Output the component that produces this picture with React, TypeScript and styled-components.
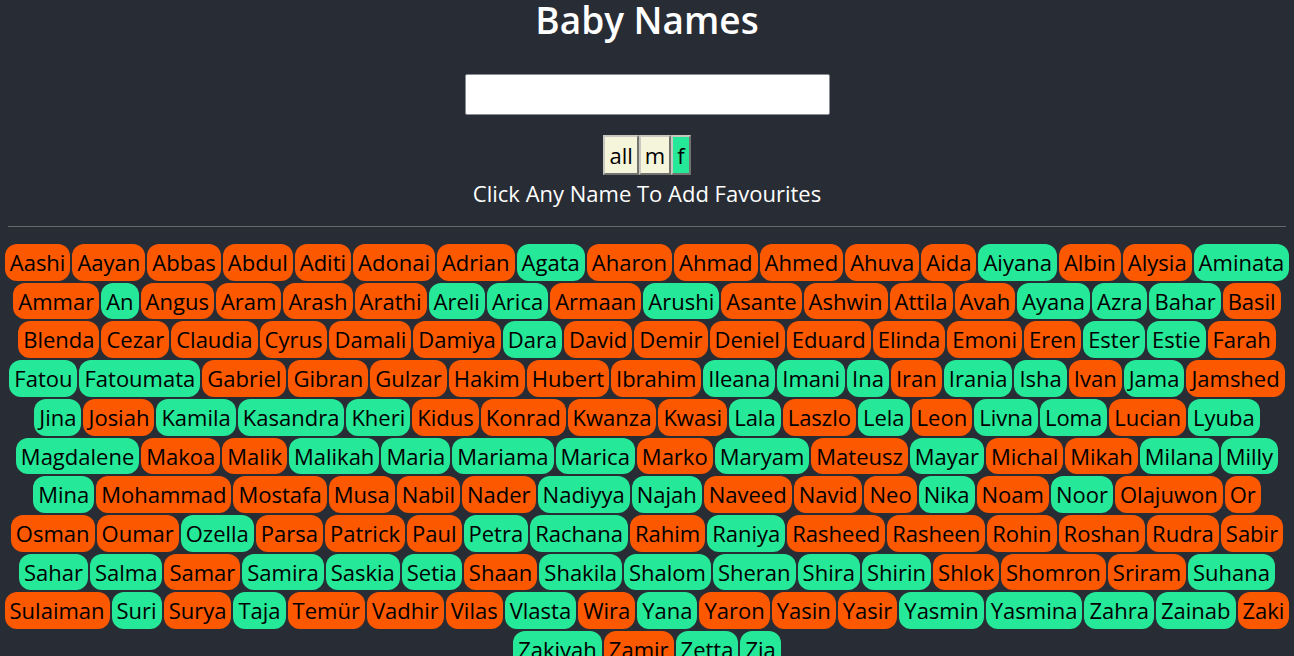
import React, { useState } from "react";
import styled, { createGlobalStyle } from "styled-components";

const GlobalStyle = createGlobalStyle`
  html, body {
    margin: 0;
    padding: 0;
    background: #282c34;
  }
  body {
    font-family: "Open Sans", "Liberation Sans", sans-serif;
  }
`;

type Sex = "m" | "f";
type Name = { name: string; sex: Sex };

const raw: string =
  "Aashi:m Aayan:m Abbas:m Abdul:m Aditi:m Adonai:m Adrian:m Agata:f Aharon:m Ahmad:m Ahmed:m Ahuva:m Aida:m Aiyana:f Albin:m Alysia:m Aminata:f " +
  "Ammar:m An:f Angus:m Aram:m Arash:m Arathi:m Areli:f Arica:f Armaan:m Arushi:f Asante:m Ashwin:m Attila:m Avah:m Ayana:f Azra:f Bahar:f Basil:m " +
  "Blenda:m Cezar:m Claudia:m Cyrus:m Damali:m Damiya:m Dara:f David:m Demir:m Deniel:m Eduard:m Elinda:m Emoni:m Eren:m Ester:f Estie:f Farah:m " +
  "Fatou:f Fatoumata:f Gabriel:m Gibran:m Gulzar:m Hakim:m Hubert:m Ibrahim:m Ileana:f Imani:f Ina:f Iran:m Irania:f Isha:f Ivan:m Jama:f Jamshed:m " +
  "Jina:f Josiah:m Kamila:f Kasandra:f Kheri:f Kidus:m Konrad:m Kwanza:m Kwasi:m Lala:f Laszlo:m Lela:f Leon:m Livna:f Loma:f Lucian:m Lyuba:f " +
  "Magdalene:f Makoa:m Malik:m Malikah:f Maria:f Mariama:f Marica:f Marko:m Maryam:f Mateusz:m Mayar:f Michal:m Mikah:m Milana:f Milly:f " +
  "Mina:f Mohammad:m Mostafa:m Musa:m Nabil:m Nader:m Nadiyya:f Najah:f Naveed:m Navid:m Neo:m Nika:f Noam:m Noor:f Olajuwon:m Or:m " +
  "Osman:m Oumar:m Ozella:f Parsa:m Patrick:m Paul:m Petra:f Rachana:f Rahim:m Raniya:f Rasheed:m Rasheen:m Rohin:m Roshan:m Rudra:m Sabir:m " +
  "Sahar:f Salma:f Samar:m Samira:f Saskia:f Setia:f Shaan:m Shakila:f Shalom:f Sheran:f Shira:f Shirin:f Shlok:m Shomron:m Sriram:m Suhana:f " +
  "Sulaiman:m Suri:f Surya:m Taja:f Temür:m Vadhir:m Vilas:m Vlasta:f Wira:m Yana:f Yaron:m Yasin:m Yasir:m Yasmin:f Yasmina:f Zahra:f Zainab:f Zaki:m " +
  "Zakiyah:f Zamir:m Zetta:f Zia:f";

const names: Name[] = raw.split(" ").map((s) => {
  const [name, sex] = s.split(":");
  return { name, sex: sex as Sex };
});

const Page = styled.div`
  color: #ffffff;
`;

const Header = styled.header`
  display: flex;
  flex-direction: column;
  align-items: center;
`;

const Title = styled.h1`
  margin: 0;
  font-size: 37px;
  line-height: 40px;
  font-weight: 600;
  color: #ffffff;
`;

const Search = styled.input`
  margin-top: 34px;
  width: 365px;
  height: 41px;
  box-sizing: border-box;
  border: 1px solid #8a8d94;
  border-radius: 2px;
  background: #ffffff;
  font-size: 18px;
  font-family: inherit;
  outline: none;
`;

const Filters = styled.div`
  display: flex;
  margin-top: 20px;
`;

const FilterButton = styled.button<{ $active: boolean }>`
  height: 40px;
  padding: 0 4px;
  box-sizing: border-box;
  border: 2px outset #c8c8c0;
  border-radius: 0;
  background: ${(p) => (p.$active ? "#25e898" : "#f5f5dc")};
  color: #000;
  font-family: inherit;
  font-size: 22px;
  cursor: pointer;
`;

const Hint = styled.p`
  margin: 4px 0 0;
  font-size: 22px;
  line-height: 28px;
  color: #ffffff;
`;

const Divider = styled.hr`
  margin: 19px 8px 16px;
  border: 0;
  border-top: 1px solid #66686e;
`;

const NameList = styled.ul`
  list-style: none;
  margin: 0;
  padding: 0 2px;
  display: flex;
  flex-wrap: wrap;
  justify-content: center;
`;

const Chip = styled.li<{ $sex: Sex }>`
  margin: 1px;
  padding: 5px 5px;
  border-radius: 12px;
  font-size: 22px;
  line-height: 26.7px;
  color: #000;
  background: ${(p) => (p.$sex === "f" ? "#25e898" : "#fc5800")};
  cursor: pointer;
`;

export default function App() {
  const [filter, setFilter] = useState<"all" | "m" | "f">("f");
  const [query, setQuery] = useState("");
  return (
    <>
      <GlobalStyle />
      <Page>
        <Header>
          <Title>Baby Names</Title>
          <Search value={query} onChange={(e) => setQuery(e.target.value)} />
          <Filters>
            {(["all", "m", "f"] as const).map((f) => (
              <FilterButton key={f} $active={filter === f} onClick={() => setFilter(f)}>
                {f}
              </FilterButton>
            ))}
          </Filters>
          <Hint>Click Any Name To Add Favourites</Hint>
        </Header>
        <Divider />
        <NameList>
          {names
            .filter((n) => n.name.toLowerCase().includes(query.toLowerCase()))
            .map((n) => (
              <Chip key={n.name} $sex={n.sex}>
                {n.name}
              </Chip>
            ))}
        </NameList>
      </Page>
    </>
  );
}
